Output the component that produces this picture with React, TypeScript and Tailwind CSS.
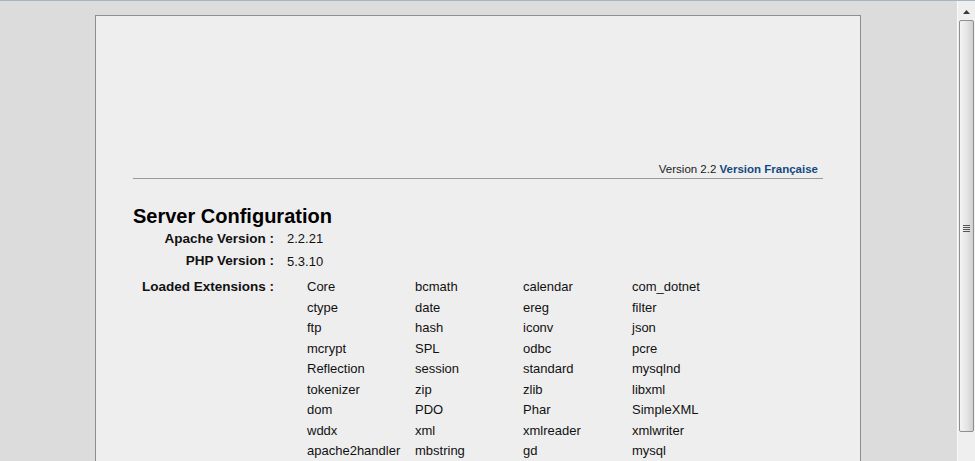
import React from "react";

const exts = [
  ["Core", "bcmath", "calendar", "com_dotnet"],
  ["ctype", "date", "ereg", "filter"],
  ["ftp", "hash", "iconv", "json"],
  ["mcrypt", "SPL", "odbc", "pcre"],
  ["Reflection", "session", "standard", "mysqlnd"],
  ["tokenizer", "zip", "zlib", "libxml"],
  ["dom", "PDO", "Phar", "SimpleXML"],
  ["wddx", "xml", "xmlreader", "xmlwriter"],
  ["apache2handler", "mbstring", "gd", "mysql"],
];

export default function App() {
  const font = { fontFamily: "'Liberation Sans', Arial, sans-serif" };
  return (
    <div className="h-[461px] w-[975px] overflow-hidden flex flex-col bg-[#dcdcdc]" style={font}>
      <div className="h-px bg-[#a7b3c7] shrink-0" />
      <div className="flex flex-1 min-h-0">
        <div className="flex-1 min-w-0 pl-[95px] pt-[14px] overflow-hidden">
          <div className="w-[766px] h-[600px] border border-[#8e8e8e] bg-[#eeeeee] pl-[37px] pr-[37px]">
            <div className="pt-[146px] border-b border-[#9a9a9a] pb-[2px]">
              <div className="text-right pr-[5px] text-[11.5px] leading-[14px] text-[#1a1a1a]">
                Version 2.2 <span className="font-bold text-[#14497f]">Version Française</span>
              </div>
            </div>
            <h2 className="mt-[25px] text-[20px] leading-[24px] font-bold text-black">
              Server Configuration
            </h2>
            <div className="text-[13px] text-[#111]">
              <div className="flex h-[22px] items-center">
                <div className="w-[141px] text-right font-bold whitespace-nowrap text-[13.5px]">Apache Version :</div>
                <div className="pl-[13px]">2.2.21</div>
              </div>
              <div className="flex h-[23px] items-center">
                <div className="w-[141px] text-right font-bold whitespace-nowrap text-[13.5px]">PHP Version :</div>
                <div className="pl-[13px]">5.3.10</div>
              </div>
              <div className="flex pt-[4px]">
                <div className="w-[141px] text-right font-bold leading-[20.5px] whitespace-nowrap text-[13.5px]">Loaded Extensions :</div>
                <div className="pl-[33px] grid grid-cols-[108px_108px_109px_108px]">
                  {exts.flat().map((e, i) => (
                    <div key={i} className="leading-[20.5px] whitespace-nowrap">{e}</div>
                  ))}
                </div>
              </div>
            </div>
          </div>
        </div>
        <div className="w-[18px] shrink-0 border-l border-[#fbfbfb] bg-[#efefef] relative">
          <div className="flex justify-center pt-[9px] h-[19px]">
            <svg width="7" height="4" viewBox="0 0 7 4"><path d="M3.5 0 L7 4 L0 4 Z" fill="#3a3a3a" /></svg>
          </div>
          <div className="mx-[1px] h-[412px] rounded-[2px] border border-[#8f8f8f] bg-gradient-to-r from-[#f4f4f4] via-[#e6e6e6] to-[#cfcfcf] flex items-center justify-center">
            <div className="flex flex-col gap-[1px] pt-[4px]">
              <div className="w-[7px] h-px bg-[#555]" />
              <div className="w-[7px] h-px bg-[#555]" />
              <div className="w-[7px] h-px bg-[#555]" />
              <div className="w-[7px] h-px bg-[#555]" />
            </div>
          </div>
        </div>
      </div>
    </div>
  );
}
